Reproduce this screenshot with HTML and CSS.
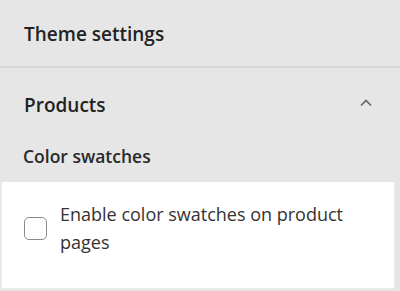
FILE: index.html
```html
<!DOCTYPE html>
<html lang="en">
<head>
    <meta charset="UTF-8">
    <title>Theme settings</title>
    <link rel="stylesheet" href="styles.css">
</head>
<body>
<div class="panel">
    <div class="head">Theme settings</div>
    <div class="section">
        <div class="section-title">
            <span>Products</span>
            <svg class="chev" width="12" height="8" viewBox="0 0 12 8">
                <path d="M1 6.5 L6 1.5 L11 6.5" fill="none" stroke="#666" stroke-width="1.7"/>
            </svg>
        </div>
        <div class="sub">Color swatches</div>
        <div class="card">
            <label class="opt">
                <span class="box"></span>
                <span class="txt">Enable color swatches on product pages</span>
            </label>
        </div>
    </div>
</div>
</body>
</html>
```

FILE: styles.css
```css
*{
    margin:0;
    padding:0;
    box-sizing:border-box;
}
body{
    background:#e6e6e6;
    font-family:"Open Sans","Noto Sans",sans-serif;
    color:#222;
}
.panel{
    width:400px;
    height:291px;
}
.head{
    height:68px;
    padding:21px 24px 0;
    font-size:19px;
    line-height:26px;
    font-weight:600;
    border-bottom:2px solid #d8d8d8;
}
.section{
    padding-top:23px;
}
.section-title{
    display:flex;
    justify-content:space-between;
    align-items:center;
    padding:0 28px 0 24px;
    font-size:19px;
    font-weight:600;
    height:28px;
}
.chev{
    margin-top:-4px;
}
.sub{
    padding:25px 23px 0;
    font-size:17.5px;
    line-height:24px;
    font-weight:600;
    height:63px;
    color:#2a2a2a;
}
.card{
    margin:0 5px 0 1px;
    height:107px;
    background:#fff;
    border:1px solid #ececec;
    border-top:none;
    padding:18px 22px 0;
}
.opt{
    display:flex;
    align-items:center;
    gap:13px;
}
.box{
    flex:none;
    width:23px;
    height:23px;
    border:1.5px solid #8a8a8a;
    border-radius:5px;
    background:#fff;
}
.txt{
    font-size:18px;
    line-height:28px;
    color:#333;
}
```
